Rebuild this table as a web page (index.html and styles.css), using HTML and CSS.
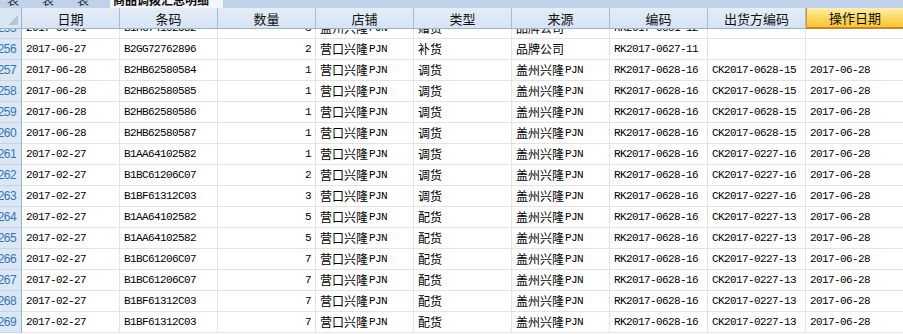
FILE: index.html
```html
<!DOCTYPE html>
<html lang="zh">
<head>
<meta charset="utf-8">
<title>明细</title>
<link rel="stylesheet" href="styles.css">
</head>
<body>
<div class="app">
  <div class="tabs">
    <div class="tab">表</div>
    <div class="tab">表</div>
    <div class="tab">表</div>
    <div class="tab active">商品调拨汇总明细</div>
  </div>
  <div class="grid">
    <div class="hd corner"><span class="tri"></span></div>
    <div class="hd">日期</div>
    <div class="hd">条码</div>
    <div class="hd">数量</div>
    <div class="hd">店铺</div>
    <div class="hd">类型</div>
    <div class="hd">来源</div>
    <div class="hd">编码</div>
    <div class="hd">出货方编码</div>
    <div class="hd sel">操作日期</div>

    <div class="rn part"><span>255</span></div>
    <div class="c part m"><span>2017-06-01</span></div>
    <div class="c part m"><span>B1HG74102582</span></div>
    <div class="c part m r"><span>3</span></div>
    <div class="c part"><span>盖州兴隆<i class="m">PJN</i></span></div>
    <div class="c part"><span>赠货</span></div>
    <div class="c part"><span>品牌公司</span></div>
    <div class="c part m"><span>RK2017-0601-12</span></div>
    <div class="c part"><span></span></div>
    <div class="c part last"><span></span></div>
  </div>
  <div class="grid body" id="rows"></div>
</div>
<script>
const rows = [
 [256,"2017-06-27","B2GG72762896",2,"营口兴隆","补货","品牌公司","","RK2017-0627-11","",""],
 [257,"2017-06-28","B2HB62580584",1,"营口兴隆","调货","盖州兴隆","PJN","RK2017-0628-16","CK2017-0628-15","2017-06-28"],
 [258,"2017-06-28","B2HB62580585",1,"营口兴隆","调货","盖州兴隆","PJN","RK2017-0628-16","CK2017-0628-15","2017-06-28"],
 [259,"2017-06-28","B2HB62580586",1,"营口兴隆","调货","盖州兴隆","PJN","RK2017-0628-16","CK2017-0628-15","2017-06-28"],
 [260,"2017-06-28","B2HB62580587",1,"营口兴隆","调货","盖州兴隆","PJN","RK2017-0628-16","CK2017-0628-15","2017-06-28"],
 [261,"2017-02-27","B1AA64102582",1,"营口兴隆","调货","盖州兴隆","PJN","RK2017-0628-16","CK2017-0227-16","2017-06-28"],
 [262,"2017-02-27","B1BC61206C07",2,"营口兴隆","调货","盖州兴隆","PJN","RK2017-0628-16","CK2017-0227-16","2017-06-28"],
 [263,"2017-02-27","B1BF61312C03",3,"营口兴隆","调货","盖州兴隆","PJN","RK2017-0628-16","CK2017-0227-16","2017-06-28"],
 [264,"2017-02-27","B1AA64102582",5,"营口兴隆","配货","盖州兴隆","PJN","RK2017-0628-16","CK2017-0227-13","2017-06-28"],
 [265,"2017-02-27","B1AA64102582",5,"营口兴隆","配货","盖州兴隆","PJN","RK2017-0628-16","CK2017-0227-13","2017-06-28"],
 [266,"2017-02-27","B1BC61206C07",7,"营口兴隆","配货","盖州兴隆","PJN","RK2017-0628-16","CK2017-0227-13","2017-06-28"],
 [267,"2017-02-27","B1BC61206C07",7,"营口兴隆","配货","盖州兴隆","PJN","RK2017-0628-16","CK2017-0227-13","2017-06-28"],
 [268,"2017-02-27","B1BF61312C03",7,"营口兴隆","配货","盖州兴隆","PJN","RK2017-0628-16","CK2017-0227-13","2017-06-28"],
 [269,"2017-02-27","B1BF61312C03",7,"营口兴隆","配货","盖州兴隆","PJN","RK2017-0628-16","CK2017-0227-13","2017-06-28"]
];
let h = "";
for (const r of rows) {
  h += `<div class="rn">${r[0]}</div>`;
  h += `<div class="c m">${r[1]}</div>`;
  h += `<div class="c m">${r[2]}</div>`;
  h += `<div class="c m r">${r[3]}</div>`;
  h += `<div class="c">${r[4]}<i class="m">PJN</i></div>`;
  h += `<div class="c">${r[5]}</div>`;
  h += `<div class="c">${r[6]}${r[7] ? '<i class="m">' + r[7] + '</i>' : ''}</div>`;
  h += `<div class="c m">${r[8]}</div>`;
  h += `<div class="c m">${r[9]}</div>`;
  h += `<div class="c m last">${r[10]}</div>`;
}
document.getElementById("rows").innerHTML = h;
</script>
</body>
</html>
```

FILE: styles.css
```css
* { box-sizing: border-box; }
html, body { margin: 0; padding: 0; background: #ffffff; }
body {
  width: 903px;
  height: 334px;
  overflow: hidden;
  font-family: "Noto Sans CJK SC", "Liberation Sans", sans-serif;
  font-size: 12px;
  color: #000;
}
.app { display: flex; flex-direction: column; height: 334px; overflow: hidden; }
.app > * { flex: none; }

.tabs {
  height: 8px;
  background: #bfd2e9;
  display: flex;
  align-items: flex-start;
  overflow: hidden;
}
.tab {
  height: 14px;
  margin-top: -6px;
  line-height: 12px;
  flex: none;
  width: 35px;
  padding-left: 7px;
  color: #2a2a2a;
  font-size: 12px;
  overflow: hidden;
}
.tab.active {
  width: 113px;
  margin-left: 5px;
  padding-left: 3px;
  background: #f2f5fa;
  font-weight: bold;
  color: #111;
}

.grid {
  display: grid;
  grid-template-columns: 22px repeat(8, 98px) 1fr;
}
.hd {
  height: 21px;
  background: linear-gradient(#e4edf8, #d6e4f3);
  border-right: 1px solid #a6bcd5;
  border-bottom: 1px solid #9db3cc;
  display: flex;
  align-items: center;
  justify-content: center;
  font-size: 13px;
  color: #111;
  line-height: 1;
}
.hd.corner { position: relative; background: #dbe6f3; border-right: 1px solid #9db3cc; }
.tri {
  position: absolute;
  right: 3px;
  bottom: 3px;
  width: 0;
  height: 0;
  border-left: 10px solid transparent;
  border-bottom: 10px solid #b5c6d9;
}
.hd.sel {
  background: linear-gradient(#fff0b0, #fdd55c 55%, #f9c440);
  border-right: none;
  border-left: 1px solid #d29a2c;
  border-bottom: 2px solid #c48a20;
}

.rn {
  height: 21px;
  background: #dce7f4;
  border-right: 1px solid #9db3cc;
  border-bottom: 1px solid #c6d5e6;
  color: #3674b4;
  font-family: "Liberation Sans", sans-serif;
  font-size: 12px;
  letter-spacing: -0.6px;
  display: flex;
  align-items: center;
  justify-content: flex-end;
  padding-right: 5px;
  overflow: hidden;
  white-space: nowrap;
}
.c {
  height: 21px;
  border-right: 1px solid #e3e3e3;
  border-bottom: 1px solid #e3e3e3;
  display: flex;
  align-items: center;
  padding-left: 4px;
  overflow: hidden;
  white-space: nowrap;
  line-height: 1;
}
.c.r { justify-content: flex-end; padding-left: 0; padding-right: 4px; }
.c.last { border-right: none; }
.m, i.m {
  font-family: "Liberation Mono", monospace;
  font-size: 11px;
  letter-spacing: -0.6px;
  font-style: normal;
}
i.m { margin-left: 1px; }

.part {
  height: 10px;
  align-items: flex-end;
}
.part > span {
  flex: none;
  height: 20px;
  display: flex;
  align-items: center;
}
.rn.part { align-items: flex-end; padding-right: 5px; }
```
